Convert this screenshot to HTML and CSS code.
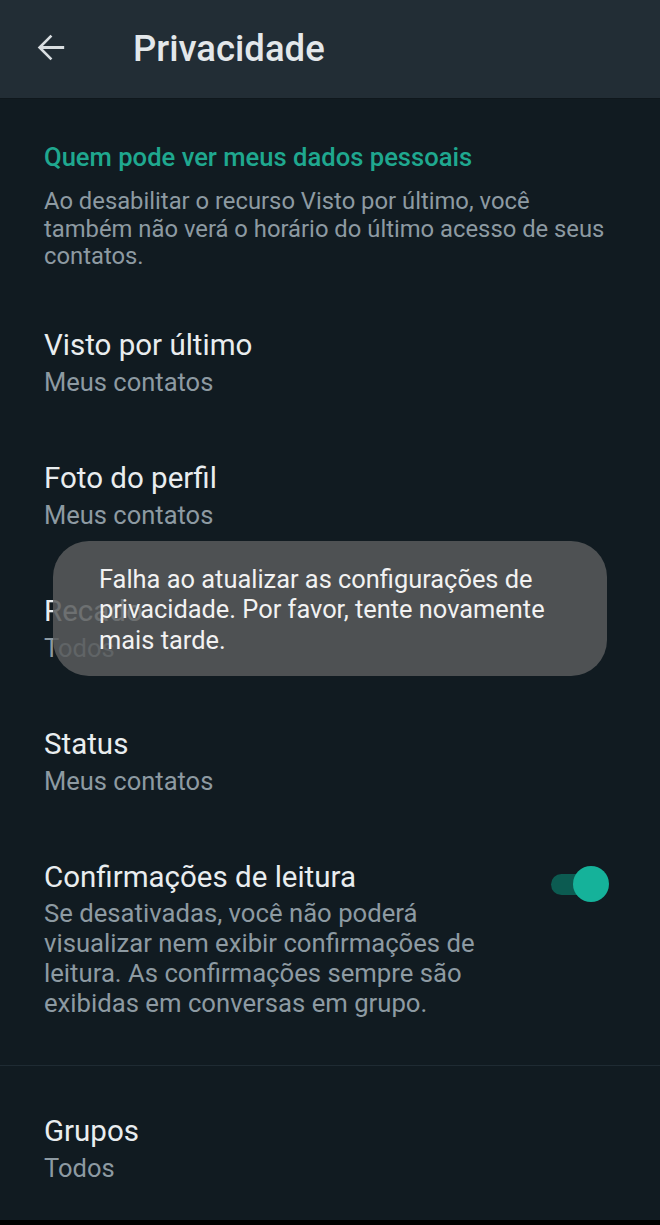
FILE: index.html
```html
<!DOCTYPE html>
<html lang="pt-BR">
<head>
<meta charset="utf-8">
<title>Privacidade</title>
<link rel="stylesheet" href="styles.css">
</head>
<body>
<div class="app">
  <header class="topbar">
    <svg class="back" viewBox="0 0 24 24" width="41" height="41" aria-hidden="true">
      <path d="M20 11.1H7.6l5.5-5.5L12 4.5l-7.5 7.5 7.5 7.5 1.1-1.1-5.5-5.5H20v-1.8z" fill="#d9dee1"/>
    </svg>
    <h1 class="title">Privacidade</h1>
  </header>

  <main class="content">
    <section class="intro">
      <h2 class="section-title">Quem pode ver meus dados pessoais</h2>
      <p class="section-desc">Ao desabilitar o recurso Visto por último, você também não verá o horário do último acesso de seus contatos.</p>
    </section>

    <div class="item">
      <div class="item-text">
        <div class="item-title">Visto por último</div>
        <div class="item-sub">Meus contatos</div>
      </div>
    </div>
    <div class="item">
      <div class="item-text">
        <div class="item-title">Foto do perfil</div>
        <div class="item-sub">Meus contatos</div>
      </div>
    </div>
    <div class="item">
      <div class="item-text">
        <div class="item-title">Recado</div>
        <div class="item-sub">Todos</div>
      </div>
    </div>
    <div class="item">
      <div class="item-text">
        <div class="item-title">Status</div>
        <div class="item-sub">Meus contatos</div>
      </div>
    </div>
    <div class="item item-toggle">
      <div class="item-text">
        <div class="item-title">Confirmações de leitura</div>
        <div class="item-desc">Se desativadas, você não poderá visualizar nem exibir confirmações de leitura. As confirmações sempre são exibidas em conversas em grupo.</div>
      </div>
      <div class="switch"><span class="track"></span><span class="thumb"></span></div>
    </div>

    <div class="divider"></div>

    <section class="group">
      <div class="item">
        <div class="item-text">
          <div class="item-title">Grupos</div>
          <div class="item-sub">Todos</div>
        </div>
      </div>
    </section>

    <div class="toast">Falha ao atualizar as configurações de privacidade. Por favor, tente novamente mais tarde.</div>
  </main>
</div>
</body>
</html>
```

FILE: styles.css
```css
html {
  background: #000;
}
body {
  margin: 0;
  font-family: Roboto, "Noto Sans", "Liberation Sans", sans-serif;
  background: #000;
}
.app {
  width: 660px;
  height: 1220px;
  overflow: hidden;
  background: #111b21;
  display: flex;
  flex-direction: column;
}
.topbar {
  height: 99px;
  flex: 0 0 99px;
  background: #222d35;
  display: flex;
  align-items: center;
  padding-left: 30px;
  box-sizing: border-box;
  border-bottom: 1px solid #0f171c;
}
.back {
  display: block;
  margin-top: -3px;
}
.title {
  margin: 0 0 0 62px;
  font-size: 36.5px;
  font-weight: 500;
  color: #e3e7ea;
  margin-top: -1px;
}
.content {
  position: relative;
  flex: 1;
}
.intro {
  padding: 43px 44px 26px 44px;
}
.section-title {
  margin: 0;
  font-size: 25.6px;
  font-weight: 500;
  line-height: 30px;
  color: #1fa88f;
}
.section-desc {
  margin: 16px 0 0 0;
  font-size: 23.8px;
  line-height: 27.5px;
  color: #8d9aa2;
}
.item {
  display: flex;
  align-items: flex-start;
  padding: 30px 44px 29px 44px;
}
.item-text {
  flex: 1;
}
.item-title {
  font-size: 29.5px;
  line-height: 36px;
  color: #e9edef;
}
.item-sub {
  font-size: 25.5px;
  line-height: 38px;
  color: #8d9aa2;
}
.item-desc {
  margin-top: 3px;
  font-size: 25.7px;
  line-height: 30.3px;
  color: #8d9aa2;
  max-width: 460px;
}
.item-toggle {
  padding-bottom: 46px;
}
.switch {
  position: relative;
  flex: 0 0 60px;
  width: 60px;
  height: 36px;
  margin-top: 7px;
  margin-right: 5px;
}
.track {
  position: absolute;
  left: 0;
  top: 8px;
  width: 46px;
  height: 21px;
  border-radius: 11px;
  background: #0c5b51;
}
.thumb {
  position: absolute;
  left: 22px;
  top: 0;
  width: 36px;
  height: 36px;
  border-radius: 50%;
  background: #15b29a;
}
.divider {
  height: 1px;
  background: #1f2b33;
}
.group {
  padding-top: 17px;
}
.toast {
  position: absolute;
  left: 53px;
  top: 442px;
  width: 554px;
  height: 135px;
  box-sizing: border-box;
  border-radius: 36px;
  background: rgba(89, 91, 92, 0.86);
  color: #f2f2f2;
  font-size: 25.4px;
  line-height: 30.4px;
  padding: 23px 33px 0 46px;
}
```
